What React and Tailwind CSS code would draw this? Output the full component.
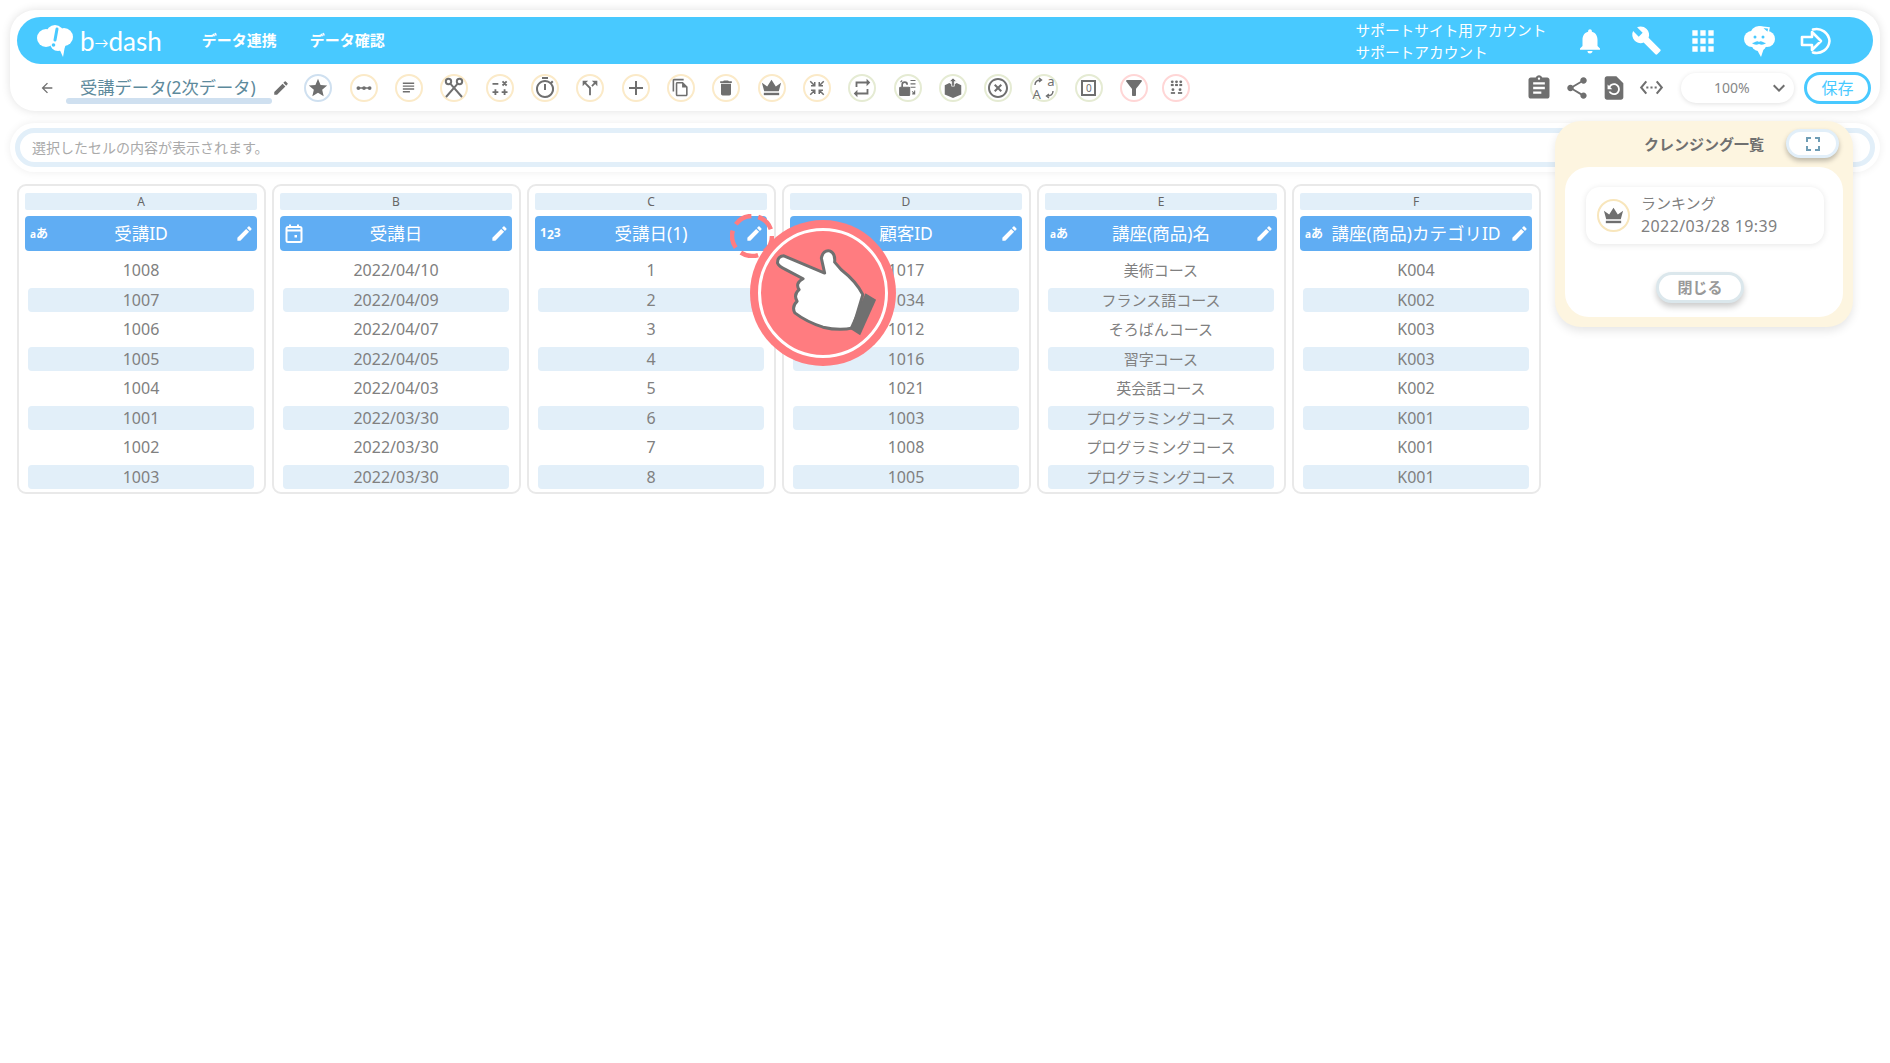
import {
  MdAdd,
  MdApps,
  MdArrowBack,
  MdAssignment,
  MdBuild,
  MdCallSplit,
  MdDelete,
  MdEdit,
  MdFilterAlt,
  MdFullscreen,
  MdHighlightOff,
  MdKeyboardArrowDown,
  MdNotifications,
  MdOutlineFileCopy,
  MdOutlineTimer,
  MdRepeat,
  MdRestorePage,
  MdSettingsEthernet,
  MdShare,
  MdStar,
  MdSubject,
} from "react-icons/md";

const gray = "#6f6f6f";

function Crown({ size = 18 }) {
  return (
    <svg width={size} height={size} viewBox="0 0 24 24" fill={gray}>
      <path d="M2 7l5.500 4L12 4l4.500 7L22 7l-2.400 9H4.400z" />
      <rect x="4" y="17.500" width="16" height="2.500" />
    </svg>
  );
}

function DotsLine() {
  return (
    <svg width="18" height="18" viewBox="0 0 24 24" fill={gray}>
      <rect x="3" y="11" width="18" height="2" />
      <circle cx="4.500" cy="12" r="2.500" />
      <circle cx="12" cy="12" r="2.500" />
      <circle cx="19.500" cy="12" r="2.500" />
    </svg>
  );
}

function Tools() {
  return (
    <svg width="24" height="24" viewBox="0 0 24 24" fill="none" stroke={gray} strokeWidth="2">
      <circle cx="6.500" cy="5.500" r="2.700" />
      <circle cx="17.500" cy="5.500" r="2.700" />
      <path d="M8.300 7.700L20 21M15.700 7.700L4 21" />
    </svg>
  );
}

function Calc() {
  return (
    <svg width="20" height="20" viewBox="0 0 24 24" fill="none" stroke={gray} strokeWidth="2.200">
      <path d="M3 7h7M15 4l5 5M20 4l-5 5M3 17h7M6.500 13.500v7M14 17h7M17.500 13.500v7" />
    </svg>
  );
}

function Shrink() {
  return (
    <svg width="18" height="18" viewBox="0 0 24 24" fill="none" stroke={gray} strokeWidth="2">
      <path d="M3 3l6 6M9 4v5H4M21 3l-6 6M15 4v5h5M3 21l6-6M9 20v-5H4M21 21l-6-6M15 20v-5h5" />
    </svg>
  );
}

function LockSwap() {
  return (
    <svg width="20" height="20" viewBox="0 0 24 24" fill="none" stroke={gray} strokeWidth="1.300">
      <rect x="2" y="11" width="12" height="10" rx="1" fill={gray} />
      <path d="M5 11V8a3 3 0 0 1 6 0" strokeWidth="2" />
      <path d="M15 3h6M15 7h6M15 11h6M17 16l3 3M3 5l2-2M20 15v4h-3" />
    </svg>
  );
}

function BoxUp() {
  return (
    <svg width="22" height="22" viewBox="0 0 24 24" fill={gray}>
      <path d="M3 9l5-2.500 4 2.500 4-2.500L21 9v10l-9 4-9-4z" />
      <path d="M12 1l4 4h-2.500v5h-3V5H8z" stroke="white" strokeWidth="0.800" />
    </svg>
  );
}

function Translate() {
  return (
    <span className="relative flex h-[24px] w-[24px] items-center justify-center text-[#6f6f6f]">
      <span className="absolute left-[1px] bottom-[-1px] text-[13px] leading-none">A</span>
      <span className="absolute right-[1px] top-[-1px] text-[13px] leading-none">a</span>
      <svg className="absolute inset-0" width="24" height="24" viewBox="0 0 24 24" fill="none" stroke={gray} strokeWidth="1.400">
        <path d="M3 9c0-3 2-5 6-5M7 2l2.500 2L7 6M21 15c0 3-2 5-6 5M17 18l-2.500 2 2.500 2" />
      </svg>
    </span>
  );
}

function ZeroBox() {
  return (
    <span className="flex h-[16px] w-[15px] items-center justify-center border-2 border-[#6f6f6f] text-[10px] leading-none text-[#6f6f6f]">
      0
    </span>
  );
}

function People() {
  return (
    <svg width="17" height="17" viewBox="0 0 24 24" fill={gray}>
      <circle cx="6" cy="4" r="2" />
      <circle cx="12" cy="4" r="2" />
      <circle cx="18" cy="4" r="2" />
      <rect x="4" y="7" width="4" height="3" />
      <rect x="10" y="7" width="4" height="3" />
      <rect x="16" y="7" width="4" height="3" />
      <circle cx="7" cy="15" r="2" />
      <circle cx="17" cy="15" r="2" />
      <rect x="4" y="18.500" width="6" height="2.500" />
      <rect x="14" y="18.500" width="6" height="2.500" />
    </svg>
  );
}

const tools = [
  { ring: "border-[#cfe0f0]", icon: <MdStar size={22} color={gray} /> },
  { ring: "border-[#fbeac8]", icon: <DotsLine /> },
  { ring: "border-[#fbeac8]", icon: <MdSubject size={17} color={gray} /> },
  { ring: "border-[#fbeac8]", icon: <Tools /> },
  { ring: "border-[#fbeac8]", icon: <Calc /> },
  { ring: "border-[#fbeac8]", icon: <MdOutlineTimer size={24} color={gray} /> },
  { ring: "border-[#fbeac8]", icon: <MdCallSplit size={22} color={gray} /> },
  { ring: "border-[#fbeac8]", icon: <MdAdd size={26} color={gray} /> },
  { ring: "border-[#fbeac8]", icon: <MdOutlineFileCopy size={19} color={gray} /> },
  { ring: "border-[#fbeac8]", icon: <MdDelete size={20} color={gray} /> },
  { ring: "border-[#fbeac8]", icon: <Crown size={23} /> },
  { ring: "border-[#fbeac8]", icon: <Shrink /> },
  { ring: "border-[#e5ebd3]", icon: <MdRepeat size={22} color={gray} /> },
  { ring: "border-[#e5ebd3]", icon: <LockSwap /> },
  { ring: "border-[#e5ebd3]", icon: <BoxUp /> },
  { ring: "border-[#e5ebd3]", icon: <MdHighlightOff size={26} color={gray} /> },
  { ring: "border-[#e5ebd3]", icon: <Translate /> },
  { ring: "border-[#e5ebd3]", icon: <ZeroBox /> },
];

const columns = [
  {
    letter: "A",
    name: "受講ID",
    type: "text",
    rows: ["1008", "1007", "1006", "1005", "1004", "1001", "1002", "1003"],
  },
  {
    letter: "B",
    name: "受講日",
    type: "date",
    rows: ["2022/04/10", "2022/04/09", "2022/04/07", "2022/04/05", "2022/04/03", "2022/03/30", "2022/03/30", "2022/03/30"],
  },
  {
    letter: "C",
    name: "受講日(1)",
    type: "num",
    rows: ["1", "2", "3", "4", "5", "6", "7", "8"],
  },
  {
    letter: "D",
    name: "顧客ID",
    type: "text-none",
    rows: ["1017", "1034", "1012", "1016", "1021", "1003", "1008", "1005"],
  },
  {
    letter: "E",
    name: "講座(商品)名",
    type: "text",
    small: true,
    rows: ["美術コース", "フランス語コース", "そろばんコース", "習字コース", "英会話コース", "プログラミングコース", "プログラミングコース", "プログラミングコース"],
  },
  {
    letter: "F",
    name: "講座(商品)カテゴリID",
    type: "text",
    rows: ["K004", "K002", "K003", "K003", "K002", "K001", "K001", "K001"],
  },
];

function TypeIcon({ type }) {
  if (type === "text") {
    return (
      <span className="text-[12px] font-bold leading-none text-white">
        <span className="text-[10px]">a</span>あ
      </span>
    );
  }
  if (type === "num") {
    return (
      <span className="flex items-center text-[12px] font-bold leading-none text-white">
        <span className="-translate-y-[1px]">1</span>
        <span className="translate-y-[1px]">2</span>
        <span className="-translate-y-[1px]">3</span>
      </span>
    );
  }
  if (type === "date") {
    return (
      <svg width="18" height="19" viewBox="0 0 18 19" fill="none" stroke="white" strokeWidth="2">
        <rect x="1.500" y="3" width="15" height="15" rx="1.500" />
        <path d="M1.500 6.500h15M5 0.500v3M13 0.500v3" />
        <rect x="9.500" y="11" width="2.500" height="2.500" fill="white" stroke="none" />
      </svg>
    );
  }
  return null;
}

function Column({ col }) {
  return (
    <div className="h-[310px] w-[249px] rounded-[9px] border-2 border-[#e9e9e9] px-[6.500px] pt-[7px]">
      <div className="flex h-[17px] items-center justify-center rounded-[2px] bg-[#e2eff9] text-[12px] text-[#666]">
        {col.letter}
      </div>
      <div className="mt-[6px] flex h-[35px] items-center rounded-[4px] bg-[#60adf3]">
        <div className="flex w-[32px] justify-start pl-[5px]">
          <TypeIcon type={col.type} />
        </div>
        <div className="flex-1 whitespace-nowrap text-center text-[17.500px] text-white">{col.name}</div>
        <div className="flex w-[32px] justify-end pr-[3px]">
          <MdEdit size={19} color="white" />
        </div>
      </div>
      <div className="mt-[7px] flex flex-col gap-[5px] px-[3px]">
        {col.rows.map((r, i) => (
          <div
            key={i}
            className={
              "flex h-[24.500px] items-center justify-center rounded-[4px] text-[#808080] " +
              (col.small ? "text-[15px] " : "text-[16px] ") +
              (i % 2 === 1 ? "bg-[#e2eff9]" : "")
            }
          >
            {r}
          </div>
        ))}
      </div>
    </div>
  );
}

function Logo() {
  return (
    <div className="flex items-center">
      <svg width="38" height="34" viewBox="0 0 38 34">
        <g fill="white">
          <circle cx="10" cy="14" r="9" />
          <circle cx="19" cy="10" r="9" />
          <circle cx="28" cy="13" r="9" />
          <circle cx="22" cy="19" r="8" />
          <path d="M22 22l5 11 2-11z" />
        </g>
        <path d="M21 5l-2 11" stroke="#48c9ff" strokeWidth="3" strokeLinecap="round" />
        <circle cx="17.500" cy="21" r="1.800" fill="#48c9ff" />
      </svg>
      <span className="ml-[6px] font-['Lato',sans-serif] text-[26px] leading-none text-white">
        b<span className="text-[14px] align-[3px]">→</span>dash
      </span>
    </div>
  );
}

function FaceCloud() {
  return (
    <svg width="34" height="34" viewBox="0 0 34 34">
      <g fill="white">
        <circle cx="10" cy="15" r="8" />
        <circle cx="17" cy="11" r="9" />
        <circle cx="25" cy="15" r="8" />
        <circle cx="17" cy="19" r="8" />
        <path d="M14 24l5 9 3-9z" />
      </g>
      <path d="M19 3l8 1-1 5z" fill="#48c9ff" stroke="white" strokeWidth="1.500" />
      <circle cx="13" cy="13" r="1.500" fill="#48c9ff" />
      <circle cx="21" cy="13" r="1.500" fill="#48c9ff" />
      <path d="M10 19c3 0 5-3 7-1 2-2 4 1 7 1-2 2-5 2-7 1-2 1-5 1-7-1z" fill="#48c9ff" />
    </svg>
  );
}

function LogIn() {
  return (
    <svg width="32" height="30" viewBox="0 0 32 30" fill="none" stroke="white" strokeWidth="2.600" strokeLinejoin="round">
      <path d="M2 11h10V6l9 9-9 9v-5H2z" />
      <path d="M13 3.500A13 13 0 0 1 29.500 15 13 13 0 0 1 13 26.500" strokeLinecap="round" />
    </svg>
  );
}

function Pointer() {
  return (
    <div className="absolute left-[750px] top-[220px] flex h-[146px] w-[146px] items-center justify-center rounded-full bg-[#ff7c80]">
      <div className="flex h-[130px] w-[130px] items-center justify-center rounded-full border-[3px] border-white">
        <svg width="146" height="146" viewBox="690 135 440 440" className="shrink-0">
          <path
            d="M792 243Q772 245 773 265Q778 276 795 283L850 312Q825 325 838 345Q820 360 832 380Q815 395 825 415Q860 442 910 458Q960 470 1000 460L1030 360Q1010 320 965 285L945 262Q948 235 930 228Q910 225 905 250L915 295z"
            fill="white"
            stroke="#707070"
            strokeWidth="9"
            strokeLinejoin="round"
          />
          <path d="M1038 356L1070 375L1022 482L990 462z" fill="#707070" />
        </svg>
      </div>
    </div>
  );
}

const navIcon = "flex w-[56.500px] shrink-0 items-center justify-center";

export default function App() {
  return (
    <div className="relative h-[1063px] w-[1890px] overflow-hidden bg-white px-[10px] pt-[10px] font-['Noto_Sans','Noto_Sans_CJK_JP',sans-serif]">
      {/* top card */}
      <div className="h-[101px] rounded-[25px] bg-white px-[7px] pt-[7px] shadow-[0_0_10px_rgba(0,0,0,0.12)]">
        <div className="flex h-[47px] items-center rounded-full bg-[#48c9ff] pl-[19px] pr-[29px]">
          <Logo />
          <div className="ml-[40px] text-[15px] font-bold text-white">データ連携</div>
          <div className="ml-[33px] text-[15px] font-bold text-white">データ確認</div>
          <div className="ml-auto w-[206px] text-[14.700px] leading-[22px] text-white">
            <div>サポートサイト用アカウント</div>
            <div>サポートアカウント</div>
          </div>
          <div className={navIcon}>
            <MdNotifications size={30} color="white" />
          </div>
          <div className={navIcon}>
            <MdBuild size={31} color="white" />
          </div>
          <div className={navIcon}>
            <MdApps size={32} color="white" />
          </div>
          <div className={navIcon}>
            <FaceCloud />
          </div>
          <div className={navIcon}>
            <LogIn />
          </div>
        </div>
        <div className="flex h-[47px] items-center">
          <MdArrowBack size={16} color={gray} className="ml-[22px]" />
          <div className="relative ml-[25px] text-[17.300px] leading-none text-[#5d8a9c]">
            受講データ(2次データ)
            <div className="absolute left-[-14px] top-[19px] h-[6px] w-[206px] rounded-full bg-[#cfe0f0]" />
          </div>
          <MdEdit size={18} color={gray} className="ml-[16px]" />
          <div className="ml-[14.500px] flex items-center gap-[17.330px]">
            {tools.map((t, i) => (
              <div key={i} className={"flex h-[28px] w-[28px] items-center justify-center rounded-full border-2 " + t.ring}>
                {t.icon}
              </div>
            ))}
            <div className="flex h-[28px] w-[28px] items-center justify-center rounded-full border-2 border-[#ffd6d6]">
              <MdFilterAlt size={26} color={gray} />
            </div>
            <div className="-ml-[3.300px] flex h-[28px] w-[28px] items-center justify-center rounded-full border-2 border-[#ffd6d6]">
              <People />
            </div>
          </div>
          <div className="ml-auto flex items-center">
            <MdAssignment size={28} color={gray} />
            <MdShare size={26} color={gray} className="ml-[11px]" />
            <MdRestorePage size={28} color={gray} className="ml-[10px]" />
            <MdSettingsEthernet size={25} color={gray} className="ml-[11px]" />
            <div className="ml-[17px] flex h-[30px] w-[113px] items-center rounded-full bg-white pl-[33px] text-[14px] text-[#888] shadow-[0_1px_5px_rgba(0,0,0,0.12)]">
              <span>100%</span>
              <MdKeyboardArrowDown size={24} color={gray} className="ml-[17px]" />
            </div>
            <div className="ml-[10px] mr-[2px] flex h-[32px] w-[67px] items-center justify-center rounded-full border-[3px] border-[#48c9ff] text-[16px] text-[#48c9ff]">
              保存
            </div>
          </div>
        </div>
      </div>

      {/* selected cell */}
      <div className="mt-[12px] h-[49px] rounded-[25px] bg-white p-[5px] shadow-[0_0_8px_rgba(0,0,0,0.07)]">
        <div className="flex h-[39px] items-center rounded-full border-[5px] border-[#e2eff9] pl-[12px] text-[14px] text-[#aaa]">
          選択したセルの内容が表示されます。
        </div>
      </div>

      {/* data table */}
      <div className="ml-[6.500px] mt-[12px] flex gap-[6px]">
        {columns.map((c) => (
          <Column key={c.letter} col={c} />
        ))}
      </div>

      {/* cleansing list */}
      <div className="absolute left-[1555px] top-[121px] h-[206px] w-[298px] rounded-[26px] bg-[#fdf5e0] px-[10px] shadow-[0_4px_10px_rgba(0,0,0,0.1)]">
        <div className="relative flex h-[46px] items-center justify-center text-[15px] font-bold text-[#707070]">
          クレンジング一覧
          <div className="absolute right-[4px] top-[8px] flex h-[29px] w-[53px] items-center justify-center rounded-full border-[3px] border-[#e2eff9] bg-white shadow-[0_3px_5px_rgba(0,0,0,0.25)]">
            <MdFullscreen size={24} color="#6f9db5" />
          </div>
        </div>
        <div className="flex h-[150px] flex-col rounded-[24px] bg-white pl-[21px] pr-[19px] pt-[20px]">
          <div className="flex h-[57px] items-center rounded-[14px] bg-white pl-[11px] shadow-[0_1px_6px_rgba(0,0,0,0.1)]">
            <div className="flex h-[33px] w-[33px] items-center justify-center rounded-full border-[2.500px] border-[#f8e6bc]">
              <Crown size={23} />
            </div>
            <div className="ml-[11px] -translate-y-[1px] leading-[23px] text-[#808080]">
              <div className="text-[15px]">ランキング</div>
              <div className="text-[16px] tracking-[0.400px]">2022/03/28 19:39</div>
            </div>
          </div>
          <div className="ml-[70px] mt-[28px] flex h-[31px] w-[88px] items-center justify-center self-start rounded-full border-[3px] border-[#dbe7ec] bg-white text-[15px] font-bold text-[#999] shadow-[0_4px_6px_rgba(0,0,0,0.2)]">
            閉じる
          </div>
        </div>
      </div>

      {/* tutorial pointer */}
      <svg className="absolute left-[730px] top-[214px]" width="44" height="44" viewBox="0 0 44 44" fill="none">
        <circle cx="22" cy="22" r="20" stroke="#ff7c80" strokeWidth="4.500" strokeDasharray="18 7" />
      </svg>
      <Pointer />
    </div>
  );
}
